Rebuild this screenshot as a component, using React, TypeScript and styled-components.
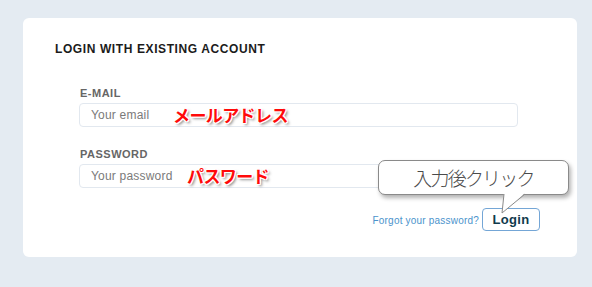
import React from "react";
import styled, { createGlobalStyle } from "styled-components";

const Global = createGlobalStyle`
  html, body { margin: 0; padding: 0; background: #e4ebf2; }
  body { font-family: "Liberation Sans", Arial, sans-serif; }
`;

const Page = styled.div`
  padding: 18px 15px 30px 23px;
`;

const Card = styled.div`
  position: relative;
  box-sizing: border-box;
  width: 554px;
  height: 239px;
  background: #ffffff;
  border-radius: 6px;
  padding: 24px 37px 0 32px;
  display: flex;
  flex-direction: column;
`;

const Title = styled.h2`
  margin: 0;
  font-size: 12px;
  line-height: 14px;
  font-weight: bold;
  letter-spacing: 0.6px;
  color: #1b1b1b;
`;

const Form = styled.div`
  margin: 31px 0 0 24px;
  width: 439px;
  display: flex;
  flex-direction: column;
`;

const Field = styled.div<{ $gap?: number }>`
  display: flex;
  flex-direction: column;
  margin-top: ${(p) => p.$gap ?? 0}px;
`;

const Label = styled.label`
  font-size: 11px;
  line-height: 13px;
  font-weight: bold;
  letter-spacing: 0.5px;
  color: #666666;
  margin: 0 0 3px 1px;
`;

const InputWrap = styled.div`
  position: relative;
`;

const Input = styled.input`
  box-sizing: border-box;
  width: 439px;
  height: 24px;
  border: 1px solid #e2e8ef;
  border-radius: 4px;
  padding: 0 11px;
  font-family: "Liberation Sans", Arial, sans-serif;
  font-size: 12px;
  letter-spacing: 0.2px;
  color: #333;
  outline: none;
  &::placeholder { color: #7a7a7a; }
`;

const Note = styled.span<{ $left: number }>`
  position: absolute;
  left: ${(p) => p.$left}px;
  top: 50%;
  transform: translateY(-50%);
  font-family: "Noto Sans CJK JP", sans-serif;
  font-weight: bold;
  font-size: 17px;
  letter-spacing: -0.6px;
  line-height: 20px;
  color: #ff0a0a;
  white-space: nowrap;
  text-shadow:
    -1px -1px 0 #fff, 1px -1px 0 #fff, -1px 1px 0 #fff, 1px 1px 0 #fff,
    0 -1px 0 #fff, 0 1px 0 #fff, -1px 0 0 #fff, 1px 0 0 #fff,
    2px 2px 3px rgba(0, 0, 0, 0.55);
  pointer-events: none;
`;

const Actions = styled.div`
  margin-top: 20px;
  display: flex;
  justify-content: flex-end;
  align-items: center;
  gap: 3px;
`;

const Forgot = styled.a`
  font-size: 10px;
  letter-spacing: 0.2px;
  color: #4b93cc;
  text-decoration: none;
  margin-top: 1px;
`;

const LoginButton = styled.button`
  box-sizing: border-box;
  height: 23px;
  width: 58px;
  border: 1px solid #74a6d6;
  border-radius: 4px;
  background: #fff;
  font-family: "Liberation Sans", Arial, sans-serif;
  font-size: 13px;
  font-weight: bold;
  letter-spacing: 0.3px;
  color: #0f3a4c;
  padding: 0;
`;

const Bubble = styled.div`
  position: absolute;
  left: 355px;
  top: 142px;
  box-sizing: border-box;
  width: 191px;
  height: 35px;
  background: #fff;
  border: 1px solid #8a8a8a;
  border-radius: 7px;
  box-shadow: 2px 3px 4px rgba(0, 0, 0, 0.3);
  display: flex;
  align-items: center;
  justify-content: center;
  font-family: "Noto Sans CJK JP", sans-serif;
  font-weight: 300;
  font-size: 19px;
  letter-spacing: -1.8px;
  color: #4a4a4a;
`;

const Tail = styled.svg`
  position: absolute;
  left: 122px;
  top: 32px;
  overflow: visible;
`;

export default function App() {
  return (
    <>
      <Global />
      <Page>
        <Card>
          <Title>LOGIN WITH EXISTING ACCOUNT</Title>
          <Form>
            <Field>
              <Label>E-MAIL</Label>
              <InputWrap>
                <Input placeholder="Your email" />
                <Note $left={94}>メールアドレス</Note>
              </InputWrap>
            </Field>
            <Field $gap={21}>
              <Label>PASSWORD</Label>
              <InputWrap>
                <Input type="password" placeholder="Your password" />
                <Note $left={108}>パスワード</Note>
              </InputWrap>
            </Field>
          </Form>
          <Actions>
            <Forgot href="#">Forgot your password?</Forgot>
            <LoginButton>Login</LoginButton>
          </Actions>
          <Bubble>
            入力後クリック
            <Tail width="26" height="22" viewBox="0 0 26 22">
              <polygon points="3,0 24,0 1,20" fill="#fff" />
              <polyline points="3,1 1,20 24,1" fill="none" stroke="#8a8a8a" strokeWidth="1" />
            </Tail>
          </Bubble>
        </Card>
      </Page>
    </>
  );
}
